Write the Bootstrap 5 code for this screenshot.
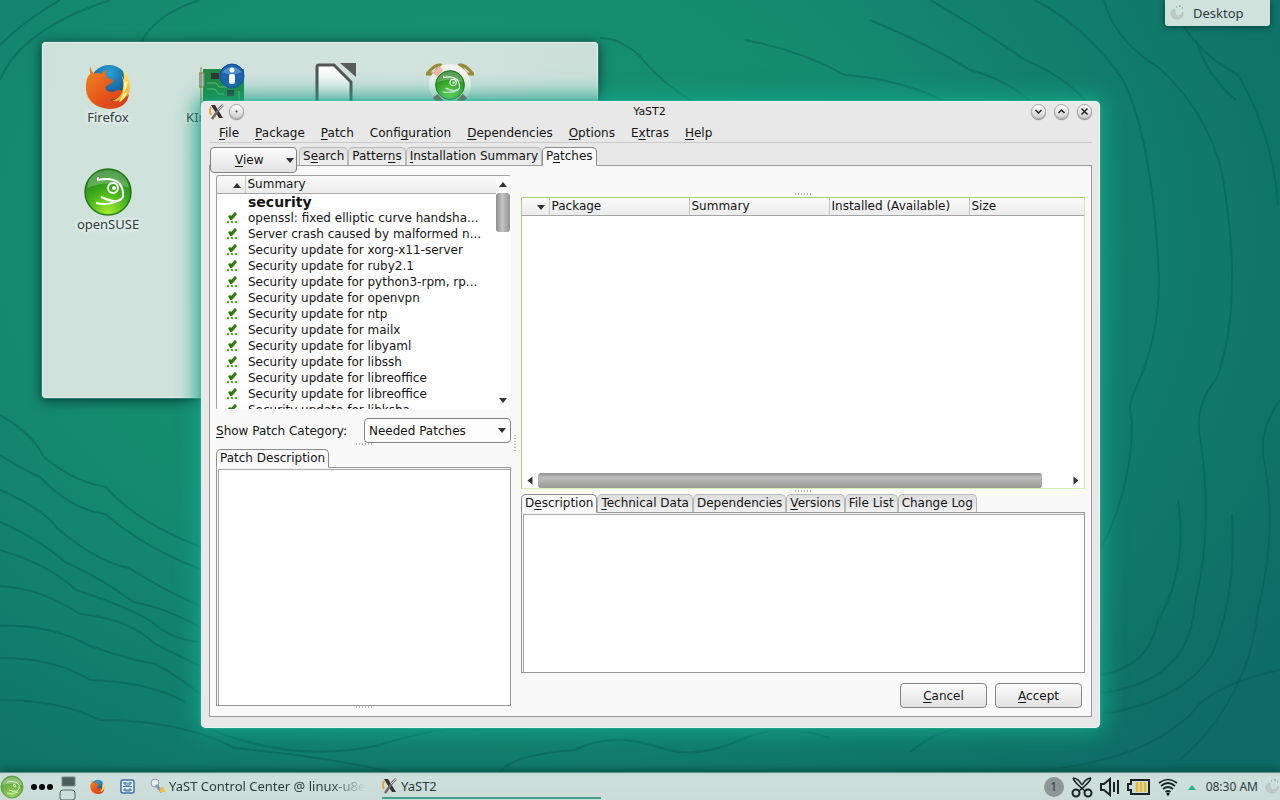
<!DOCTYPE html>
<html lang="en">
<head>
<meta charset="utf-8">
<meta name="viewport" content="width=device-width, initial-scale=1">
<title>YaST2</title>
<link href="https://cdn.jsdelivr.net/npm/bootstrap@5.3.0/dist/css/bootstrap.min.css" rel="stylesheet">
<style>
body{font-family:"DejaVu Sans",sans-serif;font-size:12px;line-height:16px;color:#141414;background:#0f7668}
button,select{font:inherit;color:inherit}
u{text-underline-offset:2px;text-decoration-thickness:1px}
.desk{min-width:900px;min-height:640px;background:radial-gradient(ellipse 1000px 760px at 36% 30%,#18936f 0,#158a70 45%,#107669 80%,#0e6b67 100%)}
.wall{inset:0;width:100%;height:100%}
.desk-text{font-family:"Noto Sans",sans-serif;font-size:13px;color:#2e3b3c}
.folder{left:42px;top:42px;width:556px;height:356px;padding:20px 8px;background:linear-gradient(100deg,#cfe1db,#d3e3de 60%,#c9ded7);border:1px solid #e4f0ec;border-radius:3px;box-shadow:0 0 0 1px #2d756a,0 2px 12px 1px #063f3a}
.launcher{width:114px;height:105px;color:inherit;text-decoration:none}
.launcher span{text-shadow:0 0 4px #fff,0 0 8px #fff}
.toolbox{top:0;right:10px;width:105px;height:26px;background:#d0e2dc;border-radius:0 0 3px 3px;box-shadow:0 1px 6px #053f3b}
.yast{left:201px;right:180px;top:101px;bottom:72px;padding:0 8px 11px;background:#e7e8e7;border-radius:5px;box-shadow:inset 0 0 1px 1px #eef7f5,0 0 3px #30b89c,0 0 22px 4px #16a287}
.titlebar{height:21px;font-size:11px}
.titlebar .caption-text{padding-left:24px}
.wbtn{width:15px;height:15px;padding:0;border:1px solid #a5a5a5;border-radius:50%;background:linear-gradient(#fff,#cfcfcf);box-shadow:0 1px 1px #888}
.wbtn svg{display:block}
.menubar{height:21px;padding:1px 0 0 2px;border-bottom:1px solid #c9c9c9}
.menubar a{padding:2px 8px;color:inherit;text-decoration:none}
.tabs{height:19px}
.tabs [role=tab]{border:1px solid #b9b9b9;border-bottom-color:#909090;border-radius:5px 5px 0 0;background:linear-gradient(#dedede,#f0f0f0);padding:0 3px;white-space:nowrap;height:19px;line-height:17px}
.tabs [role=tab].active{background:#f9f9f9;border-color:#8b8b8b #8b8b8b #f9f9f9}
.pane{gap:10px;border:1px solid #9a9a9a;background:#f9f9f9;padding:9px 6px 8px;margin-top:-1px}
.view-btn{z-index:2;width:87px;height:26px;margin:0 2px 0 1px;border:1px solid #828282;border-radius:4px;background:linear-gradient(#fbfbfb,#e3e3e3);padding:0 2px 0 24px}
.frame{border:1px solid #a0a0a0;background:#fff}
.listbox{height:235px;border-bottom-color:#fff;border-right-color:#fff;border-radius:3px}
.data{border-collapse:collapse;table-layout:fixed;width:100%}
.data th{font-weight:400;height:17px;padding:0 2px;line-height:16px;background:linear-gradient(#fafafa,#ebebeb);border-bottom:1px solid #a5a5a5;border-right:1px solid #c6c6c6}
.data th:last-child{border-right:0}
.data td{height:16px;padding:0 3px;white-space:nowrap;overflow:hidden;text-overflow:ellipsis}
.data .group{font-size:14px;font-weight:700}
.data .mark-col{width:28px;text-align:right}
.data th.mark-col{padding-right:4px}
.data td.mark-col{padding-right:7px}
.data td svg{display:block;margin-left:auto}
.tri{display:inline-block;border:4px solid transparent;border-top:5px solid #333;border-bottom:0}
.tri-up{transform:rotate(180deg)}
.tri-l{transform:rotate(90deg)}
.tri-r{transform:rotate(-90deg)}
.vbar{width:16px;padding:6px 0}
.vthumb{width:14px;height:39px;border-radius:3px;background:linear-gradient(90deg,#8e8e8e,#c4c4c4 45%,#929292);margin-top:6px}
.hbar{height:16px}
.hthumb{width:504px;height:15px;border-radius:3px;background:linear-gradient(#8f8f8f,#bcbcbc 30%,#999995)}
.left-col{width:295px}
.cat{height:25px;margin-top:8px}
.cat select{width:147px;height:25px;border:1px solid #858585;border-radius:4px;padding:0 4px;font-size:12px;line-height:16px;color:inherit;background:#fdfdfd url("data:image/svg+xml,%3Csvg xmlns='http://www.w3.org/2000/svg' width='8' height='5'%3E%3Cpath d='M0 0h8L4 5z' fill='%23333'/%3E%3C/svg%3E") no-repeat right 4px center;background-size:8px 5px}
.textpane{border:1px solid #999;background:#fff;box-shadow:inset 1px 1px 0 #f2f2f2,inset 2px 2px 0 #aaa;margin-top:-1px}
.right-col{padding-top:18px}
.pkg{height:292px;margin:2px 0 1px;border:1px solid #a5cf72;border-bottom-color:#d6eeb4;border-right-color:#cfe5b4;background:#fff}
.grip{width:16px;height:2px;flex-shrink:0;background:repeating-linear-gradient(90deg,#bbb 0 1px,transparent 1px 3px)}
.vgrip{width:2px;height:16px;left:-7px;top:260px;background:repeating-linear-gradient(#bbb 0 1px,transparent 1px 3px)}
.lower-tabs{margin-top:2px}
.actions{margin-top:10px;padding-right:3px}
.act{width:87px;height:25px;border:1px solid #858585;border-radius:4px;background:linear-gradient(#fbfbfb,#e2e2e2);padding:0}
.panelbar{left:0;right:0;bottom:0;height:27px;background:linear-gradient(#c5d8d4,#cfdfdc 4px,#cadbd8);box-shadow:0 0 0 1px #5c9189,0 -2px 10px #034640}
.launch{padding:0;border:0;background:none;line-height:0}
.shortcuts{gap:15px;margin-left:12px}
.task{height:24px;border:0;border-bottom:2px solid transparent;background:none;padding:0;gap:3px;white-space:nowrap}
.task-cc{width:217px}
.task-cc .lbl{-webkit-mask-image:linear-gradient(90deg,#000 82%,transparent)}
.task-on{width:219px;border-color:#43a08e}
.tray{gap:6px}
.count{width:20px;height:20px;border-radius:50%;background:#8d9695;font-size:12px}
.clock{font-size:12px}
</style>
</head>
<body>
<svg width="0" height="0" class="position-absolute" aria-hidden="true">
<defs>
<radialGradient id="gg" cx=".5" cy=".95" r=".9"><stop offset="0" stop-color="#a4ee2c"/><stop offset=".55" stop-color="#3fae1b"/><stop offset="1" stop-color="#1b7d1a"/></radialGradient>
<radialGradient id="gs" cx=".5" cy=".9" r=".9"><stop offset="0" stop-color="#9bd35c"/><stop offset="1" stop-color="#4b9a35"/></radialGradient>
<radialGradient id="gb" cx=".5" cy=".2" r=".8"><stop offset="0" stop-color="#28a4d8"/><stop offset="1" stop-color="#163a78"/></radialGradient>
<linearGradient id="go" x1="0" y1="0" x2="1" y2="1"><stop offset="0" stop-color="#f08a1c"/><stop offset=".6" stop-color="#e3501b"/><stop offset="1" stop-color="#d13a16"/></linearGradient>
<linearGradient id="gy" x1="0" y1="0" x2="0" y2="1"><stop offset="0" stop-color="#fff06a"/><stop offset="1" stop-color="#f28a18"/></linearGradient>
<linearGradient id="gd" x1="0" y1="0" x2="0" y2="1"><stop offset="0" stop-color="#fff"/><stop offset="1" stop-color="#dde2e0"/></linearGradient>
<symbol id="fox" viewBox="0 0 44 44"><circle cx="23" cy="20" r="18" fill="url(#gb)"/><path d="M36 6q7 7 7 18-2 18-21 19-16 0-21-14l22 8q13-3 14-17 1-8-1-14z" fill="url(#gy)"/><path d="M5 3q1 5 4 7 4-1 7 0 2-3 5-3-2 4 0 7l6 2q0 3-5 5-3 2-2 4 4 5 10 1 4-1 6 1-4 9-13 8 9 5 19-5-2 14-19 14Q4 42 1 26 0 15 5 10 4 6 5 3z" fill="url(#go)"/><path d="M34 11q3 3 4 8l3-2q-1 8-4 12 3 0 4-2-3 8-9 11 6-9 5-16 0-7-3-11z" fill="#fff38a"/></symbol>
<symbol id="suse" viewBox="0 0 48 48"><circle cx="24" cy="24" r="23" fill="url(#gg)" stroke="#217a16" stroke-width="1.500"/><path d="M3 20Q5 3 24 2q18 1 21 18Q24 11 3 20z" fill="#fff" opacity=".25"/><path d="M14 9v3q14-3 21 3 5 6 4 14-3 5-10 4-6-1-12-4" fill="none" stroke="#fff" stroke-width="2"/><path d="M12 35q15 3 25-4" fill="none" stroke="#fff" stroke-width="2"/><circle cx="29" cy="20" r="5" fill="none" stroke="#fff" stroke-width="2"/><circle cx="30" cy="20" r="2" fill="#fff"/></symbol>
<symbol id="suse-sm" viewBox="0 0 24 24"><circle cx="12" cy="12" r="11" fill="url(#gs)" stroke="#59a04a"/><path d="M2 10Q4 2 12 2q8 0 10 8-10-3-20 0z" fill="#fff" opacity=".3"/><path d="M7 7q9-2 12 3 1 5-2 6-4 1-8-1M7 18q6 2 11-1M14 9q3 1 1 3-3-1-1-3z" fill="none" stroke="#dff2cc" stroke-width="1"/></symbol>
<symbol id="xlogo" viewBox="0 0 16 16"><path d="M2 3q-2 4 0 8" fill="none" stroke="#e9a33a" stroke-width="2"/><path d="M2 1h4l8 13h-4z" fill="#35302c"/><path d="M14 1q-4 3-6 7l-5 7" fill="none" stroke="#6e6a66" stroke-width="2.500"/><path d="M14 1l-5 5" stroke="#ddd"/></symbol>
<symbol id="tick" viewBox="0 0 12 12"><path d="M2 4l2-1 1 1 4-4 2 2-5 6H4z" fill="#2c7d10"/><path d="M1 9h2v2H1zM5 9h2v2H5zM9 9h2v2H9z" fill="#5aa53f"/></symbol>
<symbol id="cashew" viewBox="0 0 16 16"><path d="M6 4Q1 5 2 10q2 5 8 4 5-2 4-7-1 4-5 4-4-1-3-7z" fill="#bfcac7" stroke="#a9b7b4" stroke-width=".5"/><path d="M7 2h1M10 1h2M13 3h1" stroke="#a9b7b4" stroke-width="2"/></symbol>
</defs></svg>

<main class="desk position-relative vh-100 overflow-hidden">
<svg class="wall position-absolute" viewBox="0 0 1280 800" preserveAspectRatio="none" aria-hidden="true">
<g fill="none" stroke="#05584f" stroke-opacity=".38" stroke-width="2">
<path d="M0 80Q20 30 110 0M140 44Q155 14 200 0M0 45Q25 20 60 0M600 38q20 0 40 18 20 26 55 47M745 40q55 10 100 35 60 5 100 27M870 20q60 25 100 50 40 10 70 40M930 0q60 35 95 60 50 20 75 60M1035 0q55 30 88 80 30 60 36 200 0 60-24 110-8 15-3 30 0 70-32 130M1104 0q10 40 55 68 45 40 62 100 24 130-4 210-25 30-16 65 12 90-6 160-5 80-95 90M1170 0q20 50 68 75 35 60 40 130M1280 400q-22 30-16 60 14 70-6 150-10 90-78 150M1196 40q10 35 40 60"/>
<path d="M0 415q32 18 44 42 30 25 62 30 30 35 95 60M0 455q22 14 40 22 30 32 65 37 40 34 95 55M0 490q45 20 57 38 40 34 72 40 40 25 72 38M0 522q40 18 65 40 40 18 68 40 30 5 67 25M0 550q50 15 76 40 55 18 76 32 20 18 48 20M0 586q40 2 80 28 50 5 75 30l45 22M0 626q50-2 90 20 45 15 65 18 20 10 45 30M0 658q55 0 90 22 60 2 95 22M0 700q60 0 100 20 80 0 135 28 100 10 160 25M200 725q90 40 180 20 60-20 100-15M500 773q10-18 75-23 35-18 80-4 40 15 85-6 40-18 90-2M910 752q25-20 50-24M1040 770q100-8 150-55 20-30 90-45M1100 675q50-8 58-55 30-50 20-120M1102 714q80-12 110-60 25-60 20-140"/>
</g></svg>

<section class="folder desk-text position-absolute d-flex flex-wrap align-content-start">
<a class="launcher d-flex flex-column align-items-center" href="#"><svg width="46" height="46"><use href="#fox"/></svg><span>Firefox</span></a>
<a class="launcher d-flex flex-column align-items-center" href="#"><svg width="46" height="46" viewBox="0 0 46 46"><path d="M4 6h41v36H4z" fill="#1f8a42"/><path d="M2 4v40M0 10h5v14H0z" stroke="#8b7b40" fill="#9ec5d6"/><path d="M12 10h8v6h-8zM28 27h7v6h-7z" fill="#333"/><path d="M8 20h9l3 4h8M8 26h8l4 5h5M10 38h22M40 28v10" stroke="#6cc36e" fill="none"/><circle cx="33" cy="13" r="12" fill="#1c62b0" stroke="#124b92"/><path d="M23 9q10-10 20 0-10 5-20 0z" fill="#6da9de" opacity=".6"/><circle cx="33" cy="7" r="2.500" fill="#fff"/><rect x="30" y="11" width="6" height="10" rx="2" fill="#fff"/></svg><span>KInfocenter</span></a>
<a class="launcher d-flex flex-column align-items-center" href="#"><svg width="46" height="46" viewBox="0 0 46 46"><path d="M6 2h15l17 17v27H4V4q0-2 2-2z" fill="url(#gd)" stroke="#555" stroke-width="3"/><path d="M27 0h16v14z" fill="#5b5b5b"/></svg><span>LibreOffice</span></a>
<a class="launcher d-flex flex-column align-items-center" href="#"><svg width="48" height="46" viewBox="0 0 48 46"><path d="M1 11q8-10 13-9L8 11zM47 11Q39 1 34 2l6 9z" fill="none" stroke="#9b8a35" stroke-width="3"/><circle cx="24" cy="22" r="18" fill="none" stroke="#f2f2ee" stroke-width="6"/><path d="M9 12l6-7" stroke="#f2b5aa" stroke-width="6"/><path d="M9 33l6 6M39 33l-6 6" stroke="#b54a40" stroke-width="6"/><svg x="9" y="7" width="30" height="30"><use href="#suse"/></svg></svg><span>Help</span></a>
<a class="launcher d-flex flex-column align-items-center" href="#"><svg width="48" height="48"><use href="#suse"/></svg><span>openSUSE</span></a>
</section>

<button class="toolbox desk-text position-absolute border-0 d-flex align-items-center gap-2 p-0 ps-1"><svg width="16" height="16"><use href="#cashew"/></svg><span>Desktop</span></button>

<section class="yast position-absolute d-flex flex-column">
<header class="titlebar d-flex align-items-center">
<svg width="16" height="16" class="flex-shrink-0"><use href="#xlogo"/></svg>
<button class="wbtn ms-1" aria-label="Pin"><svg width="13" height="13"><circle cx="6.500" cy="6.500" r="1" fill="#333"/></svg></button>
<span class="caption-text flex-grow-1 text-center">YaST2</span>
<div class="d-flex gap-2">
<button class="wbtn" aria-label="Minimize"><svg width="13" height="13"><path d="M3.500 5l3 3 3-3" fill="none" stroke="#222" stroke-width="1.500"/></svg></button>
<button class="wbtn" aria-label="Maximize"><svg width="13" height="13"><path d="M3.500 8l3-3 3 3" fill="none" stroke="#222" stroke-width="1.500"/></svg></button>
<button class="wbtn" aria-label="Close"><svg width="13" height="13"><path d="M3.500 3.500l6 6m0-6l-6 6" stroke="#222" stroke-width="1.500"/></svg></button>
</div>
</header>
<nav class="menubar d-flex"><a href="#"><u>F</u>ile</a><a href="#"><u>P</u>ackage</a><a href="#"><u>P</u>atch</a><a href="#">Confi<u>g</u>uration</a><a href="#"><u>D</u>ependencies</a><a href="#"><u>O</u>ptions</a><a href="#">E<u>x</u>tras</a><a href="#"><u>H</u>elp</a></nav>
<div class="tabs d-flex mt-1" role="tablist">
<button class="view-btn position-relative d-flex align-items-center justify-content-between flex-shrink-0"><span><u>V</u>iew</span><i class="tri"></i></button>
<button role="tab">S<u>e</u>arch</button><button role="tab">Patter<u>n</u>s</button><button role="tab"><u>I</u>nstallation Summary</button><button role="tab" class="active position-relative">P<u>a</u>tches</button>
</div>
<div class="pane flex-grow-1 d-flex">
<div class="left-col d-flex flex-column flex-shrink-0">
<div class="frame listbox d-flex overflow-hidden flex-shrink-0">
<div class="flex-grow-1 overflow-hidden">
<table class="data"><thead><tr><th class="mark-col"><i class="tri tri-up"></i></th><th>Summary</th></tr></thead>
<tbody>
<tr><td></td><td class="group">security</td></tr>
<tr><td class="mark-col"><svg width="12" height="12"><use href="#tick"/></svg></td><td>openssl: fixed elliptic curve handsha...</td></tr>
<tr><td class="mark-col"><svg width="12" height="12"><use href="#tick"/></svg></td><td>Server crash caused by malformed n...</td></tr>
<tr><td class="mark-col"><svg width="12" height="12"><use href="#tick"/></svg></td><td>Security update for xorg-x11-server</td></tr>
<tr><td class="mark-col"><svg width="12" height="12"><use href="#tick"/></svg></td><td>Security update for ruby2.1</td></tr>
<tr><td class="mark-col"><svg width="12" height="12"><use href="#tick"/></svg></td><td>Security update for python3-rpm, rp...</td></tr>
<tr><td class="mark-col"><svg width="12" height="12"><use href="#tick"/></svg></td><td>Security update for openvpn</td></tr>
<tr><td class="mark-col"><svg width="12" height="12"><use href="#tick"/></svg></td><td>Security update for ntp</td></tr>
<tr><td class="mark-col"><svg width="12" height="12"><use href="#tick"/></svg></td><td>Security update for mailx</td></tr>
<tr><td class="mark-col"><svg width="12" height="12"><use href="#tick"/></svg></td><td>Security update for libyaml</td></tr>
<tr><td class="mark-col"><svg width="12" height="12"><use href="#tick"/></svg></td><td>Security update for libssh</td></tr>
<tr><td class="mark-col"><svg width="12" height="12"><use href="#tick"/></svg></td><td>Security update for libreoffice</td></tr>
<tr><td class="mark-col"><svg width="12" height="12"><use href="#tick"/></svg></td><td>Security update for libreoffice</td></tr>
<tr><td class="mark-col"><svg width="12" height="12"><use href="#tick"/></svg></td><td>Security update for libksba</td></tr>
</tbody></table>
</div>
<div class="vbar d-flex flex-column align-items-center"><i class="tri tri-up"></i><div class="vthumb"></div><i class="tri mt-auto"></i></div>
</div>
<div class="cat d-flex align-items-center justify-content-between"><label for="category"><u>S</u>how Patch Category:</label><select id="category" class="form-select"><option>Needed Patches</option></select></div>
<div class="grip align-self-center"></div>
<div class="tabs mt-1" role="tablist"><button role="tab" class="active position-relative">Patch Description</button></div>
<div class="textpane flex-grow-1"></div>
<div class="grip align-self-center"></div>
</div>
<div class="right-col position-relative flex-grow-1 d-flex flex-column">
<div class="vgrip position-absolute"></div>
<div class="grip align-self-center"></div>
<div class="pkg d-flex flex-column justify-content-between">
<table class="data"><colgroup><col style="width:27px"><col style="width:140px"><col style="width:140px"><col style="width:140px"><col></colgroup><thead><tr><th class="mark-col"><i class="tri"></i></th><th>Package</th><th>Summary</th><th>Installed (Available)</th><th>Size</th></tr></thead></table>
<div class="hbar d-flex align-items-center px-1"><i class="tri tri-l me-1"></i><div class="hthumb"></div><i class="tri tri-r ms-auto"></i></div>
</div>
<div class="grip align-self-center"></div>
<div class="tabs lower-tabs d-flex" role="tablist"><button role="tab" class="active position-relative">D<u>e</u>scription</button><button role="tab"><u>T</u>echnical Data</button><button role="tab">Dependencies</button><button role="tab"><u>V</u>ersions</button><button role="tab">File List</button><button role="tab">Change Log</button></div>
<div class="textpane flex-grow-1"></div>
<div class="d-flex justify-content-end gap-2 actions"><button class="act"><u>C</u>ancel</button><button class="act"><u>A</u>ccept</button></div>
</div>
</div>
</section>

<footer class="panelbar desk-text position-absolute d-flex align-items-center">
<button class="launch" aria-label="Menu"><svg width="24" height="24"><use href="#suse-sm"/></svg></button>
<button class="launch" aria-label="Activities"><svg width="34" height="24"><circle cx="10" cy="12" r="3"/><circle cx="18" cy="12" r="3"/><circle cx="26" cy="12" r="3"/></svg></button>
<button class="launch" aria-label="Desktops"><svg width="20" height="27"><path d="M4 4h13v9H4z" fill="#4d5b5f" stroke="#7b8b8c"/><path d="M5 17h9q3 0 3 3v5q0 2-3 2H4q-2 0-2-2v-5q0-3 3-3z" fill="none" stroke="#536064"/></svg></button>
<div class="shortcuts d-flex align-items-center">
<button class="launch" aria-label="Firefox"><svg width="15" height="15"><use href="#fox"/></svg></button>
<button class="launch" aria-label="Files"><svg width="15" height="15"><rect x="1" y="1" width="13" height="13" rx="2" fill="#e9f2fa" stroke="#3872aa" stroke-width="1.500"/><path d="M3 4h9M3 7.500h9M3 11h9M5 3v3h5V3M5 9v3h5V9" fill="none" stroke="#3872aa"/></svg></button>
<button class="task task-cc d-flex align-items-center"><svg width="16" height="16" class="flex-shrink-0"><circle cx="5" cy="5" r="4" fill="#e8edf2" stroke="#8a9cb5"/><path d="M6 7l6 7" stroke="#8a9cb5" stroke-width="3"/><path d="M9 14l3-6 4 6z" fill="#f0c040"/></svg><span class="lbl">YaST Control Center @ linux-u8e</span></button>
<button class="task task-on d-flex align-items-center"><svg width="16" height="16" class="flex-shrink-0"><use href="#xlogo"/></svg><span>YaST2</span></button>
</div>
<div class="tray d-flex align-items-center ms-auto">
<span class="count d-flex align-items-center justify-content-center">1</span>
<svg width="24" height="22" viewBox="0 0 24 22"><path d="M3 2q1 4 12 13M21 2q-1 4-12 13M3 2q5 0 9 7M21 2q-5 0-9 7" fill="none" stroke="#1a2425" stroke-width="1.500"/><circle cx="6" cy="17" r="3.500" fill="none" stroke="#1a2425" stroke-width="2"/><circle cx="18" cy="17" r="3.500" fill="none" stroke="#1a2425" stroke-width="2"/></svg>
<svg width="20" height="20" viewBox="0 0 20 20"><path d="M1 7h3l6-5v16l-6-5H1z" fill="none" stroke="#1a2425" stroke-width="2"/><path d="M14 5v10M18 3v14" stroke="#1a2425" stroke-width="2"/></svg>
<svg width="26" height="20" viewBox="0 0 26 20"><path d="M5 3h18v14H5v-4H2V7h3z" fill="none" stroke="#1a2425" stroke-width="2"/><path d="M11 5v10M15 5v10M19 5v10" stroke="#ecb92c" stroke-width="2.500"/></svg>
<svg width="20" height="20" viewBox="0 0 20 20"><path d="M1 6q9-7 18 0M3 9q7-6 14 0M5 12q5-4 10 0M7.500 15q2.500-2 5 0" fill="none" stroke="#1a2425" stroke-width="1.700"/><circle cx="10" cy="17" r="1.500"/></svg>
<svg width="16" height="10"><path d="M4 8l4-5 4 5z" fill="#27b48a"/></svg>
<span class="clock">08:30 AM</span>
<svg width="16" height="16"><use href="#cashew"/></svg>
</div>
</footer>
</main>
<script src="https://cdn.jsdelivr.net/npm/bootstrap@5.3.0/dist/js/bootstrap.bundle.min.js"></script>
</body>
</html>
